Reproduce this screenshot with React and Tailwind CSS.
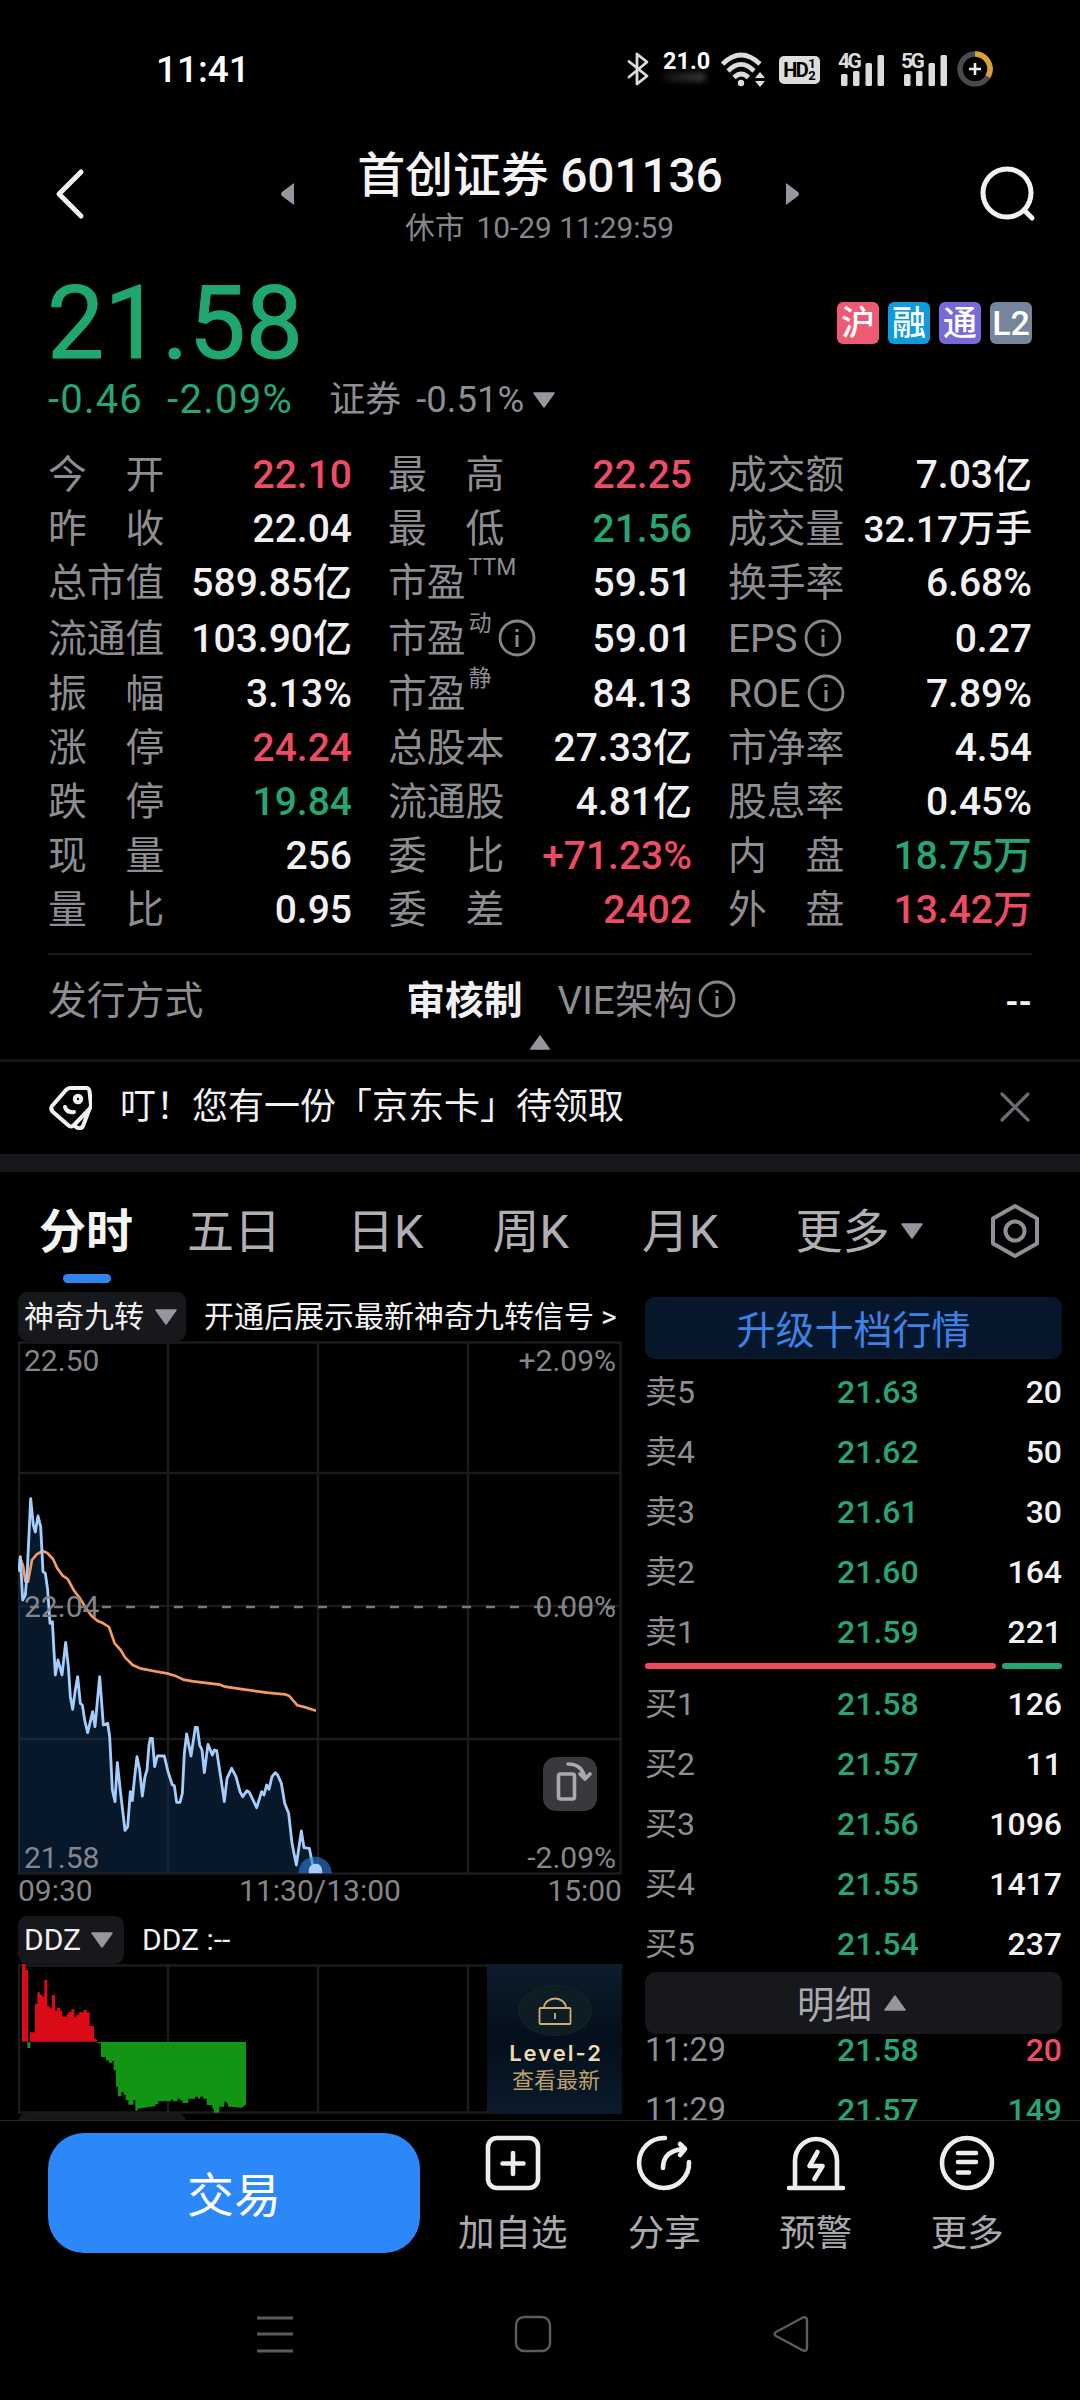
const RED = "text-[#ee4b64]";
const GREEN = "text-[#27a573]";
const WHITE = "text-[#f1f1f3]";

const stats = [
     { label: "今　开", value: "22.10", color: RED },
     { label: "最　高", value: "22.25", color: RED },
     { label: "成交额", value: "7.03亿" },
     { label: "昨　收", value: "22.04" },
     { label: "最　低", value: "21.56", color: GREEN },
     { label: "成交量", value: "32.17万手", size: "text-[37px]" },
     { label: "总市值", value: "589.85亿" },
     { label: "市盈", sup: "TTM", value: "59.51" },
     { label: "换手率", value: "6.68%" },
     { label: "流通值", value: "103.90亿" },
     { label: "市盈", sup: "动", info: true, value: "59.01" },
     { label: "EPS", info: true, value: "0.27" },
     { label: "振　幅", value: "3.13%" },
     { label: "市盈", sup: "静", value: "84.13" },
     { label: "ROE", info: true, value: "7.89%" },
     { label: "涨　停", value: "24.24", color: RED },
     { label: "总股本", value: "27.33亿" },
     { label: "市净率", value: "4.54" },
     { label: "跌　停", value: "19.84", color: GREEN },
     { label: "流通股", value: "4.81亿" },
     { label: "股息率", value: "0.45%" },
     { label: "现　量", value: "256" },
     { label: "委　比", value: "+71.23%", color: RED },
     { label: "内　盘", value: "18.75万", color: GREEN },
     { label: "量　比", value: "0.95" },
     { label: "委　差", value: "2402", color: RED },
     { label: "外　盘", value: "13.42万", color: RED },
];

const asks = [
     ["卖5", "21.63", "20"],
     ["卖4", "21.62", "50"],
     ["卖3", "21.61", "30"],
     ["卖2", "21.60", "164"],
     ["卖1", "21.59", "221"],
];

const bids = [
     ["买1", "21.58", "126"],
     ["买2", "21.57", "11"],
     ["买3", "21.56", "1096"],
     ["买4", "21.55", "1417"],
     ["买5", "21.54", "237"],
];

const badges = [
     { text: "沪", style: "bg-[#ee5a72]" },
     { text: "融", style: "bg-[#109bdd]" },
     { text: "通", style: "bg-[#7769d8]" },
     { text: "L2", style: "bg-[#75869c]" },
];

const PRICE_LINE =
     "25,275 31,230 38,360 46,345 52,270 62,56 70,135 76,156 84,108 92,140 99,275 106,280 113,330 120,430 127,425 136,585 144,540 156,585 167,487 175,560 181,650 188,688 196,630 203,590 211,670 217,675 225,725 233,758 248,695 255,740 269,590 280,735 293,730 299,770 307,930 315,965 322,848 333,950 345,1051 353,1040 361,935 367,962 373,900 381,830 389,870 397,948 405,890 411,870 417,795 421,775 427,775 434,860 442,828 463,828 474,875 487,915 493,917 500,967 510,967 517,940 523,820 530,762 543,828 556,742 562,742 569,795 576,810 583,878 594,793 607,825 613,810 620,812 632,890 643,965 651,895 665,865 678,890 690,935 698,950 711,932 718,937 740,983 755,935 762,945 770,915 777,928 786,890 796,878 803,885 814,910 824,970 836,1000 846,1090 859,1155 874,1053 882,1103 898,1105 907,1150 915,1170";

const AVG_LINE =
     "31,235 40,260 46,305 54,305 66,240 80,223 98,213 112,219 129,237 142,265 158,287 173,297 192,332 210,355 228,385 245,408 262,422 280,430 297,441 314,490 332,510 345,532 368,555 390,565 430,573 475,581 495,587 520,599 550,604 630,614 645,620 700,628 770,638 825,643 838,648 862,676 890,683 918,692";

function Triangle({ className, dir = "down" }) {
     const points = {
          down: "1,1 21,1 11,15",
          up: "1,15 21,15 11,1",
     };
     return (
          <svg viewBox="0 0 22 16" className={className}>
               <polygon points={points[dir]} fill="#9696a0" stroke="#9696a0" strokeWidth="1.5" strokeLinejoin="round" />
          </svg>
     );
}

function Info() {
     return (
          <svg viewBox="0 0 38 38" className="w-[38px] h-[38px] shrink-0" fill="none" stroke="#85858c">
               <circle cx="19" cy="19" r="17" strokeWidth="2.800" />
               <path d="M19 16v12" strokeWidth="3" />
               <path d="M19 10v3" strokeWidth="3" />
          </svg>
     );
}

function Signal({ name }) {
     return (
          <div className="relative w-[46px] h-[35px]">
               <svg viewBox="0 0 46 35" className="w-[46px] h-[35px]" fill="#dcdcdc">
                    <rect x="3" y="22" width="6.5" height="12" rx="1.5" />
                    <rect x="15" y="19" width="6.5" height="15" rx="1.5" />
                    <rect x="27.500" y="11" width="6.5" height="23" rx="1.5" />
                    <rect x="39.500" y="3" width="6.5" height="31" rx="1.5" />
               </svg>
               <span className="absolute left-0 -top-px text-[21px] leading-[20px] font-bold tracking-[-2.500px] text-[#dcdcdc]">{name}</span>
          </div>
     );
}

function StatusBar() {
     return (
          <div className="h-[138px] flex items-center pl-[156px] pr-[87px]">
               <span className="text-[37px] font-medium leading-none">11:41</span>
               <div className="ml-auto flex items-center">
                    <svg viewBox="0 0 22 34" className="w-[22px] h-[34px]" fill="none" stroke="#dcdcdc" strokeWidth="2.800" strokeLinejoin="round" strokeLinecap="round">
                         <path d="M2 9.500 20 24l-10 8V2l10 8L2 25" />
                    </svg>
                    <div className="ml-[14px] h-[35px] w-[47px] relative">
                         <span className="block text-[23.500px] font-bold leading-[20px] -mt-px">21.0</span>
                         <span className="absolute left-0 top-[21px] w-[42px] h-[8px] bg-gradient-to-r from-[#111] to-[#444] blur-[3px]"></span>
                    </div>
                    <svg viewBox="0 0 45 35" className="ml-[11px] w-[45px] h-[35px]" fill="none" stroke="#dcdcdc" strokeWidth="4.600">
                         <path d="M1.500 12Q20 -6 39 12" />
                         <path d="M7 19Q20 6 33 19" />
                         <path d="M13 25.500Q20 18.500 27.500 25.500" />
                         <circle cx="20" cy="31" r="3.200" fill="#dcdcdc" stroke="none" />
                         <path d="M34 26l5-6 5 6zM34 29l5 6 5-6z" fill="#dcdcdc" stroke="none" />
                    </svg>
                    <div className="ml-[13px] mt-[2px] w-[41px] h-[28px] rounded-[5px] bg-[#dcdcdc] text-black flex items-center justify-center">
                         <span className="text-[20px] leading-none font-bold tracking-[-1.500px]">HD</span>
                         <span className="flex flex-col text-[13px] leading-[12px] font-bold ml-px"><span>1</span><span>2</span></span>
                    </div>
                    <div className="ml-[18px]"><Signal name="4G" /></div>
                    <div className="ml-[17px]"><Signal name="5G" /></div>
                    <svg viewBox="0 0 36 36" className="ml-[10px] w-[36px] h-[36px]" fill="none">
                         <circle cx="18" cy="18" r="15" stroke="#4a4a4c" strokeWidth="5.500" />
                         <path d="M18 3A15 15 0 0 1 31 25.500" stroke="#dc9f3c" strokeWidth="5.500" />
                         <path d="M18 12v12M12 18h12" stroke="#eee" strokeWidth="2.600" />
                    </svg>
               </div>
          </div>
     );
}

function Header() {
     return (
          <div className="h-[112px] flex items-center justify-between pl-[55px] pr-[44px]">
               <svg viewBox="0 0 30 52" className="w-[30px] h-[52px]" fill="none" stroke="#f2f2f2" strokeWidth="5" strokeLinecap="round" strokeLinejoin="round">
                    <path d="M26 4 4 26l22 22" />
               </svg>
               <div className="flex items-center gap-[62px] ml-[14px]">
                    <svg viewBox="0 0 14 22" className="w-[14px] h-[22px]"><path d="M14 0v22L2 13q-2-2 0-4z" fill="#9696a0" /></svg>
                    <div className="w-[368px] pt-[8px] flex flex-col items-center whitespace-nowrap">
                         <h1 className="text-[48px] leading-[56px] font-medium tracking-[-0.200px] text-[#f4f4f4] pl-[1px]">首创证券 601136</h1>
                         <p className="text-[29.800px] leading-[40px] mt-[4px] text-[#85858c]"><span className="mr-[12px]">休市</span>10-29 11:29:59</p>
                    </div>
                    <svg viewBox="0 0 14 22" className="w-[14px] h-[22px]"><path d="M0 0v22l12-9q2-2 0-4z" fill="#9696a0" /></svg>
               </div>
               <svg viewBox="0 0 56 56" className="w-[56px] h-[56px]" fill="none" stroke="#f2f2f2" strokeWidth="5" strokeLinecap="round">
                    <circle cx="27" cy="27" r="24" />
                    <path d="M44.500 44.500 52 52" />
               </svg>
          </div>
     );
}

function Quote() {
     return (
          <div className="h-[197px] px-[48px] flex justify-between">
               <div>
                    <div className="mt-[20px] text-[102px] leading-[106px] text-[#1fa76f] -ml-[1px] [-webkit-text-stroke:1px_#1fa76f]">21.58</div>
                    <div className="h-[48px] flex items-center text-[40px] leading-none">
                         <span className="text-[#27a573] tracking-[1.200px]">-0.46</span>
                         <span className="text-[#27a573] tracking-[1.300px] ml-[24px]">-2.09%</span>
                         <span className="text-[36px] text-[#8d8d92] ml-[36px]">证券</span>
                         <span className="text-[36.500px] text-[#8d8d92] ml-[15px]">-0.51%</span>
                         <Triangle className="ml-[9px] w-[22px] h-[16px]" />
                    </div>
               </div>
               <div className="flex gap-[9px] mt-[52px]">
                    {badges.map((b) => (
                         <span key={b.text} className={`w-[42px] h-[42px] rounded-[6px] flex items-center justify-center text-[34px] leading-none font-medium text-white ${b.style}`}>
                              {b.text}
                         </span>
                    ))}
               </div>
          </div>
     );
}

function Stats() {
     return (
          <div className="px-[48px] pt-[1px]">
               <div className="grid grid-cols-3 gap-x-[36px] grid-rows-[54px_54px_55px_56px_54px_54px_54px_54px_54px]">
                    {stats.map((s, i) => (
                         <div key={i} className="flex items-center justify-between whitespace-nowrap leading-none">
                              <div className="flex items-center text-[38.800px] text-[#8d8d92]">
                                   <span>{s.label}</span>
                                   {s.sup && <sup className="text-[23px] leading-none top-0 mb-[32px] ml-[3px]">{s.sup}</sup>}
                                   {s.info && <span className="ml-[6px] -mt-[2px]"><Info /></span>}
                              </div>
                              <span className={`${s.size || "text-[39px]"} font-medium ${s.color || WHITE}`}>{s.value}</span>
                         </div>
                    ))}
               </div>
               <div className="mt-[16px] border-t-2 border-[#17171a] h-[82px] flex items-center pt-[12px] text-[38.800px] leading-none text-[#8d8d92]">
                    <span>发行方式</span>
                    <span className="ml-[203px] font-bold text-[#f1f1f3]">审核制</span>
                    <span className="ml-[35px]">VIE架构</span>
                    <span className="ml-[5px] -mt-[4px]"><Info /></span>
                    <span className="ml-auto font-bold text-[34px] text-[#f1f1f3]">--</span>
               </div>
               <div className="h-[24px] flex justify-center"><Triangle dir="up" className="w-[22px] h-[15px]" /></div>
          </div>
     );
}

function Banner() {
     return (
          <div className="h-[95px] border-t-[3px] border-[#17171a] px-[48px] pb-[2px] flex items-center">
               <svg viewBox="0 0 44 46" className="w-[44px] h-[46px]" fill="none" stroke="#f2f2f2" strokeWidth="4" strokeLinecap="round" strokeLinejoin="round">
                    <path d="M22 4h16q3 0 3.500 3l1.500 14q0 2-1.500 4L26 41q-3 3-6 0L5 28q-3-3-1-6L18 6q2-2 4-2z" />
                    <circle cx="30" cy="15" r="3.200" />
                    <path d="M17 23q2 6 9 5" />
                    <path d="M41 26 35 42q-2 4-7 1" />
               </svg>
               <span className="ml-[28px] text-[36px] leading-none text-[#f1f1f3]">叮！您有一份「京东卡」待领取</span>
               <svg viewBox="0 0 30 30" className="ml-auto mr-[2px] w-[30px] h-[30px]" stroke="#6b6b72" strokeWidth="3.200" strokeLinecap="round">
                    <path d="M2 2l26 26M28 2 2 28" />
               </svg>
          </div>
     );
}

function Tabs() {
     return (
          <div className="h-[118px] pl-[39px] pr-[39px] flex items-center text-[47px] leading-none text-[#afafb4]">
               <div className="relative font-bold text-[#f4f4f4]">
                    分时
                    <span className="absolute left-[24px] top-[66px] w-[48px] h-[9px] rounded-full bg-[#2f86ee]"></span>
               </div>
               <span className="ml-[54px]">五日</span>
               <span className="ml-[66px]">日K</span>
               <span className="ml-[69px]">周K</span>
               <span className="ml-[73px]">月K</span>
               <span className="ml-[77px]">更多</span>
               <Triangle className="ml-[11px] w-[22px] h-[16px]" />
               <svg viewBox="0 0 52 56" className="ml-auto w-[52px] h-[56px]" fill="none" stroke="#8f8f96" strokeWidth="4" strokeLinejoin="round">
                    <path d="M26 3 48 15.500v25L26 53 4 40.500v-25z" />
                    <circle cx="26" cy="28" r="9.500" />
               </svg>
          </div>
     );
}

function MinuteChart() {
     return (
          <div className="relative h-[534px] text-[30px] leading-none text-[#85858c]">
               <svg viewBox="0 0 604 534" className="w-[604px] h-[534px]" fill="none">
                    <path d="M1 1.500h601.500v531H1zM150 1v531M300 1v531M450 1v531M1 132h601M1 265h601M1 398h601" stroke="#1b1b1d" strokeWidth="2.500" />
                    <g transform="translate(-8 139) scale(0.33333)">
                         <polygon points={`${PRICE_LINE} 915,1178 25,1178`} fill="#0d355c" fillOpacity="0.45" />
                         <polyline points={AVG_LINE} stroke="#f79a60" strokeWidth="8" strokeLinejoin="round" />
                    </g>
                    <path d="M12 266h592" stroke="#77777b" strokeWidth="2.500" strokeDasharray="9 15" />
                    <g transform="translate(-8 139) scale(0.33333)">
                         <polyline points={PRICE_LINE} stroke="#a5cdfb" strokeWidth="8.500" strokeLinejoin="round" />
                         <path d="M865 1180a50 50 0 1 1 100 0z" fill="#2f7fe0" fillOpacity="0.6" />
                         <path d="M896 1180q-2-28 20-29t21 29z" fill="#a5cdfb" />
                    </g>
               </svg>
               <div className="absolute inset-0 flex flex-col justify-between px-[6px] pt-[5px] pb-[2px]">
                    <div className="flex justify-between"><span>22.50</span><span>+2.09%</span></div>
                    <div className="flex justify-between mb-[5px]"><span>22.04</span><span>0.00%</span></div>
                    <div className="flex justify-between"><span>21.58</span><span>-2.09%</span></div>
               </div>
               <div className="absolute left-[525px] top-[416px] w-[54px] h-[54px] rounded-[13px] bg-[#39393d] flex items-center justify-center">
                    <svg viewBox="0 0 54 54" className="w-[54px] h-[54px]" fill="none" stroke="#aaaaad" strokeWidth="3.600" strokeLinecap="round" strokeLinejoin="round">
                         <rect x="15.500" y="17" width="16" height="25" rx="2" />
                         <path d="M25 7q14 0 17 14M37 17l5 5 5-5" />
                    </svg>
               </div>
          </div>
     );
}

function DdzChart() {
     return (
          <div className="relative h-[150px]">
               <svg viewBox="0 0 604 150" className="w-[604px] h-[150px]" fill="none">
                    <path d="M1 1.500h601.500v147H1zM150 1v147M300 1v147M450 1v147" stroke="#1b1b1d" strokeWidth="2.500" />
                    <g transform="translate(-18 -4) scale(0.33333)">
                         <path d="M66 245V12H77V30H84V245zM90 245V217H105V132H112V97H120V104H127V110H133V60H142V139H149V145H156V105H165V152H170V144H180V152H187V171H200V163H206V156H214V148H223V172H229V165H237V157H251V150H260V157H269V198H282V236H288V240H292V245z" fill="#da0b17" />
                         <path d="M82 246H91V264H82zM292 246H738V434L725 443L690 440H684V430H679V425H673V440H658V458H642V446H637V435H620V416H610V410H600V416H594V410H585V416H565V429H547V421H540V416H533V424H518V419H512V424H475V432H467V438L413 446V452H406V420H400V434H385V420H377V404H371V397H364V409H354V380H348V331H341V303H336V308H326V301H318V291H303V250H292z" fill="#129512" />
                    </g>
               </svg>
               <div className="absolute right-0 top-0 w-[135px] h-[150px] bg-gradient-to-b from-[#0d1d2b] via-[#040f1b] to-[#0b1b2b] flex flex-col items-center">
                    <div className="mt-[21px] w-[74px] h-[51px] rounded-[50%] bg-[#0e1d24] border border-[#15252b] flex items-center justify-center">
                         <svg viewBox="0 0 34 30" className="w-[34px] h-[30px]" fill="none" stroke="#cfae74" strokeWidth="1.800">
                              <rect x="1.500" y="12" width="31" height="16" rx="1" />
                              <path d="M6 12a11 9.500 0 0 1 22 0M17 17v6" />
                         </svg>
                    </div>
                    <span className="mt-[6px] text-[22px] leading-[22px] font-['Inter'] font-semibold tracking-[2px] text-[#ecdcae] pl-[3px]">Level-2</span>
                    <span className="mt-[6px] text-[22px] leading-none text-[#bd9f6a] pl-[3px]">查看最新</span>
               </div>
          </div>
     );
}

function Row({ cells, color, labelSize }) {
     return (
          <div className="h-[60px] flex items-center text-[32px] leading-none font-medium">
               <span className={`w-[192px] font-normal text-[#8d8d92] ${labelSize}`}>{cells[0]}</span>
               <span className={GREEN}>{cells[1]}</span>
               <span className={`ml-auto ${color}`}>{cells[2]}</span>
          </div>
     );
}

function OrderBook() {
     return (
          <div className="w-[417px] ml-[23px] pt-[7px]">
               <div className="h-[62px] pt-[6px] rounded-[10px] bg-[#07172b] text-[#3d82e6] text-[39px] leading-none flex items-center justify-center">升级十档行情</div>
               <div className="pt-[3px]">
                    {asks.map((r) => <Row key={r[0]} cells={r} color={WHITE} labelSize="text-[32px]" />)}
               </div>
               <div className="flex gap-[6px] h-[6px] mt-[1px]">
                    <span className="w-[351px] rounded-full bg-[#ee4b5f]"></span>
                    <span className="flex-1 rounded-full bg-[#27a573]"></span>
               </div>
               <div className="mt-[5px]">
                    {bids.map((r) => <Row key={r[0]} cells={r} color={WHITE} labelSize="text-[32px]" />)}
               </div>
               <div className="-mt-[2px] h-[62px] pt-[5px] pr-[4px] rounded-[11px] bg-[#17181b] text-[#a9a9af] text-[37.500px] leading-none flex items-center justify-center">
                    明细
                    <Triangle dir="up" className="ml-[12px] mb-[6px] w-[22px] h-[16px]" />
               </div>
               <div className="-mt-[14px]">
                    <Row cells={["11:29", "21.58", "20"]} color={RED} labelSize="text-[32.500px]" />
                    <Row cells={["11:29", "21.57", "149"]} color={GREEN} labelSize="text-[32.500px]" />
               </div>
          </div>
     );
}

function Action({ label, children }) {
     return (
          <div className="w-[151.500px] flex flex-col items-center">
               <svg viewBox="0 0 60 56" className="w-[60px] h-[56px]" fill="none" stroke="#eeeef2" strokeWidth="4.600" strokeLinecap="round" strokeLinejoin="round">
                    {children}
               </svg>
               <span className="mt-[23px] text-[36.500px] leading-[40px] text-[#a9a9af]">{label}</span>
          </div>
     );
}

function BottomBar() {
     return (
          <div className="h-[279px] border-t border-[#262626]">
               <div className="flex pt-[12px] pl-[48px]">
                    <button className="w-[372px] h-[120px] pt-[5px] rounded-[36px] bg-[#2c88f8] text-[47px] leading-none text-white">交易</button>
                    <div className="flex ml-[17px] pt-[2px]">
                         <Action label="加自选">
                              <rect x="5" y="3" width="50" height="50" rx="9" />
                              <path d="M30 18v21M19.500 28.500h21" />
                         </Action>
                         <Action label="分享">
                              <path d="M31 3A25 25 0 1 0 55 27" />
                              <path d="M29 33q0-17 20-19M46 9l5 5-5 6" />
                         </Action>
                         <Action label="预警">
                              <path d="M9 53V26a21 22 0 0 1 42 0v27M3 53h54" />
                              <path d="M31.500 17l-8 14h13l-8 13" />
                         </Action>
                         <Action label="更多">
                              <circle cx="30" cy="28" r="25" />
                              <path d="M21 18h18M21 27h18M21 37.500h11" />
                         </Action>
                    </div>
               </div>
               <div className="mt-[61px] flex items-center justify-between pl-[257px] pr-[270px]">
                    <svg viewBox="0 0 36 38" className="w-[36px] h-[38px]" stroke="#5c5c5c" strokeWidth="2.800"><path d="M0 3h36M0 19h36M0 36h36" /></svg>
                    <svg viewBox="0 0 38 38" className="w-[38px] h-[38px]" stroke="#5c5c5c" strokeWidth="2.400" fill="none"><rect x="2" y="2" width="34" height="34" rx="8" /></svg>
                    <svg viewBox="0 0 38 38" className="w-[38px] h-[38px]" stroke="#5c5c5c" strokeWidth="2.400" fill="none" strokeLinejoin="round"><path d="M31 2.500 4 17q-3 2 0 4l27 14.500q4 1 4-3v-27q0-4-4-3z" /></svg>
               </div>
          </div>
     );
}

export default function App() {
     return (
          <div className="w-[1080px] h-[2400px] overflow-hidden bg-black text-white font-['Roboto','Noto_Sans_CJK_SC',sans-serif]">
               <StatusBar />
               <Header />
               <Quote />
               <Stats />
               <Banner />
               <div className="h-[18px] bg-[#16181b]"></div>
               <Tabs />
               <div className="h-[830px] overflow-hidden flex pl-[18px]">
                    <div className="w-[604px]">
                         <div className="h-[51px] pt-[2px] flex items-center text-[30px] leading-none text-[#f1f1f3] whitespace-nowrap">
                              <div className="h-[49px] w-[168px] rounded-[9px] bg-[#17181b] flex items-center pl-[6px]">
                                   神奇九转
                                   <Triangle className="ml-[11px] w-[22px] h-[16px]" />
                              </div>
                              <span className="ml-[18px]">开通后展示最新神奇九转信号</span>
                              <span className="ml-[7px]">&gt;</span>
                         </div>
                         <MinuteChart />
                         <div className="h-[41px] flex justify-between items-center pb-[9px] text-[30px] leading-none text-[#85858c]">
                              <span>09:30</span>
                              <span>11:30/13:00</span>
                              <span>15:00</span>
                         </div>
                         <div className="h-[48px] flex items-center text-[30px] leading-none text-[#f1f1f3]">
                              <div className="h-[48px] w-[106px] rounded-[9px] bg-[#17181b] flex items-center pl-[6px]">
                                   DDZ
                                   <Triangle className="ml-[10px] w-[22px] h-[16px]" />
                              </div>
                              <span className="ml-[18px]">DDZ :--</span>
                         </div>
                         <DdzChart />
                         <div className="w-[168px] h-[49px] rounded-[9px] bg-[#17181b] -mt-[1px]"></div>
                    </div>
                    <OrderBook />
               </div>
               <BottomBar />
          </div>
     );
}
